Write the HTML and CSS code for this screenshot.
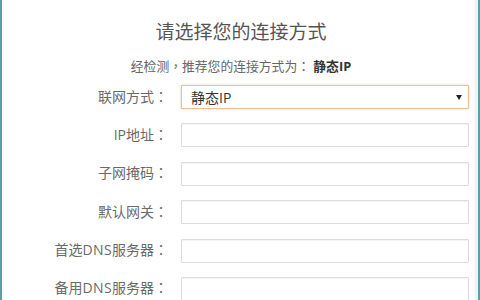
FILE: index.html
```html
<!DOCTYPE html>
<html lang="zh-CN">
<head>
<meta charset="utf-8">
<link rel="stylesheet" href="styles.css">
</head>
<body>
<div class="frame">
  <h1 class="title">请选择您的连接方式</h1>
  <p class="hint">经检测<span class="p" lang="zh-TW">，</span>推荐您的连接方式为<span class="p" lang="zh-TW">：</span> <b>静态IP</b></p>
  <div class="form">
    <label class="lbl">联网方式<span class="p" lang="zh-TW">：</span></label>
    <div class="select"><span>静态IP</span><i class="arrow"></i></div>
    <label class="lbl">IP地址<span class="p" lang="zh-TW">：</span></label>
    <div class="input"></div>
    <label class="lbl">子网掩码<span class="p" lang="zh-TW">：</span></label>
    <div class="input"></div>
    <label class="lbl">默认网关<span class="p" lang="zh-TW">：</span></label>
    <div class="input"></div>
    <label class="lbl">首选<span class="lat">DNS</span>服务器<span class="p" lang="zh-TW">：</span></label>
    <div class="input"></div>
    <label class="lbl">备用<span class="lat">DNS</span>服务器<span class="p" lang="zh-TW">：</span></label>
    <div class="input"></div>
  </div>
</div>
</body>
</html>
```

FILE: styles.css
```css
html, body {
  margin: 0;
  padding: 0;
  background: #fff;
}
body {
  width: 480px;
  height: 300px;
  overflow: hidden;
  font-family: "Open Sans", "Noto Sans CJK SC", sans-serif;
}
.frame {
  box-sizing: border-box;
  width: 480px;
  height: 300px;
  border-left: 2px solid #5f9ea8;
  border-right: 2px solid #5f9ea8;
  box-shadow: inset -3px 0 0 #e6f6f8;
  padding-top: 19px;
}
.p {
  font-family: "Noto Sans CJK TC", sans-serif;
}
.lat {
  letter-spacing: 0.4px;
}
.title {
  margin: 0;
  text-align: center;
  font-size: 19px;
  font-weight: normal;
  color: #555;
  line-height: 26px;
  padding-left: 2px;
}
.hint {
  margin: 13px 0 0;
  text-align: center;
  font-size: 12.8px;
  line-height: 16px;
  color: #666;
  padding-left: 2px;
}
.hint b {
  color: #333;
  font-weight: bold;
}
.form {
  display: grid;
  grid-template-columns: 166px 288px;
  column-gap: 13px;
  row-gap: 14.4px;
  margin-top: 11px;
  align-items: center;
}
.lbl {
  text-align: right;
  font-size: 14px;
  color: #6a6a6a;
  line-height: 18px;
  padding-bottom: 2px;
}
.input, .select {
  box-sizing: border-box;
  height: 24px;
  border: 1px solid #dcdcdc;
  border-radius: 1px;
  box-shadow: inset 0 1px 1px rgba(0,0,0,0.05);
  background: #fff;
}
.select {
  border-color: #eac09a;
  box-shadow: 0 0 2px rgba(235, 170, 110, 0.7);
  display: flex;
  align-items: center;
  justify-content: space-between;
  padding: 0 6px 0 9px;
  font-size: 14px;
  color: #333;
}
.arrow {
  width: 0;
  height: 0;
  border-left: 3px solid transparent;
  border-right: 3px solid transparent;
  border-top: 5px solid #222;
}
```
